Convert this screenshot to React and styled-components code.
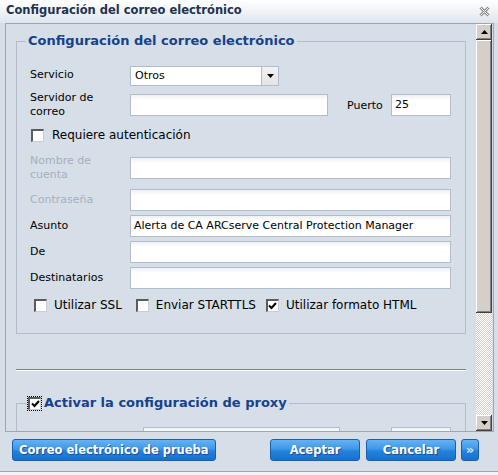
import React from "react";
import styled, { createGlobalStyle } from "styled-components";

const GlobalStyle = createGlobalStyle`
  html, body {
    margin: 0;
    padding: 0;
    background: #f2f3f5;
    font-family: "DejaVu Sans", Verdana, sans-serif;
  }
`;

const Dialog = styled.div`
  width: 498px;
  height: 472px;
  box-sizing: border-box;
  background: #d6dee8;
  border-bottom: 1px solid #9ea4ac;
  display: flex;
  flex-direction: column;
`;

const TitleBar = styled.div`
  height: 23px;
  flex: none;
  display: flex;
  align-items: center;
  padding: 0 8px 0 6px;
  background: linear-gradient(#ffffff, #f3f5f8 40%, #dfe5ed);
`;

const Title = styled.div`
  flex: 1;
  font-size: 11.5px;
  font-weight: bold;
  color: #1e324e;
  padding-bottom: 3px;
`;

const Body = styled.div`
  padding: 0 4px 0 5px;
`;

const ScrollPanel = styled.div`
  height: 409px;
  box-sizing: border-box;
  border: 1px solid #a2a6ac;
  display: flex;
`;

const Content = styled.div`
  flex: 1;
  overflow: hidden;
  padding: 0 10px;
`;

const Fieldset = styled.fieldset`
  margin: ${(p) => p.$top}px 0 0;
  border: 1px solid #b5bcc9;
  padding: ${(p) => p.$padTop}px 13px 17px 13px;
  display: flex;
  flex-direction: column;
  gap: 4px;
`;

const Legend = styled.legend`
  margin-left: -4px;
  padding: 0 2px;
  font-size: 13px;
  line-height: 16px;
  font-weight: bold;
  color: #15428b;
  display: flex;
  align-items: center;
  gap: 3px;
`;

const Row = styled.div`
  display: flex;
  align-items: center;
  height: ${(p) => p.$h || 22}px;
  margin-top: ${(p) => p.$mt || 0}px;
`;

const Label = styled.div`
  width: ${(p) => p.$w || 100}px;
  flex: none;
  font-size: 11px;
  line-height: 14px;
  color: ${(p) => (p.$disabled ? "#a6afbd" : "#000")};
`;

const Input = styled.div`
  width: ${(p) => p.$w}px;
  height: 22px;
  box-sizing: border-box;
  border: 1px solid #b3bccc;
  background: linear-gradient(#eef0f4, #ffffff 5px);
  font-size: 11px;
  line-height: 20px;
  padding: 0 3px;
  color: #000;
  white-space: nowrap;
  overflow: hidden;
`;

const Select = styled.div`
  width: 149px;
  height: 20px;
  box-sizing: border-box;
  border: 1px solid #b3bccc;
  background: #fff;
  display: flex;
  margin-top: 1px;
`;

const SelectText = styled.div`
  flex: 1;
  font-size: 11px;
  line-height: 18px;
  padding: 0 4px;
`;

const SelectButton = styled.div`
  width: 16px;
  border-left: 1px solid #b3bccc;
  background: linear-gradient(#f2f2f2, #e4e4e4);
  display: flex;
  align-items: center;
  justify-content: center;
`;

const PortLabel = styled.div`
  width: ${(p) => p.$w || 44}px;
  flex: none;
  font-size: 11px;
  margin-left: 19px;
`;

const CheckLabel = styled.label`
  display: flex;
  align-items: center;
  gap: ${(p) => p.$gap || 7}px;
  font-size: 12px;
  color: #000;
  margin-left: ${(p) => p.$ml || 0}px;
`;

const Box = styled.span`
  width: 13px;
  height: 13px;
  box-sizing: border-box;
  flex: none;
  background: #fff;
  border-top: 2px solid #5c5c5c;
  border-left: 2px solid #5c5c5c;
  border-right: 1px solid #c9ccd2;
  border-bottom: 1px solid #c9ccd2;
  display: flex;
  align-items: center;
  justify-content: center;
  outline: ${(p) => (p.$focus ? "1px dotted #000" : "none")};
  outline-offset: 0;
`;

const Separator = styled.div`
  margin-top: 35px;
  height: 1px;
  background: #7e8286;
  border-bottom: 1px solid #ffffff;
`;

const Scrollbar = styled.div`
  width: 16px;
  margin-right: 1px;
  display: flex;
  flex-direction: column;
  background: repeating-conic-gradient(#d4d0c8 0 25%, #ffffff 0 50%) 0 0 / 2px 2px;
`;

const raised = `
  background: #d4d0c8;
  box-shadow: inset -1px -1px #404040, inset 1px 1px #ffffff, inset -2px -2px #808080;
`;

const ScrollButton = styled.div`
  height: 16px;
  flex: none;
  ${raised}
  display: flex;
  align-items: center;
  justify-content: center;
`;

const Thumb = styled.div`
  height: 273px;
  flex: none;
  ${raised}
`;

const Track = styled.div`
  flex: 1;
`;

const ButtonBar = styled.div`
  display: flex;
  align-items: center;
  gap: 6px;
  padding: 7px 19px 0 12px;
`;

const Button = styled.div`
  height: 22px;
  width: ${(p) => (p.$w ? `${p.$w}px` : "auto")};
  box-sizing: border-box;
  padding: 0 ${(p) => (p.$w ? 0 : 6)}px;
  border: 1px solid #1a5fae;
  border-radius: 3px;
  background: linear-gradient(#64b2f3, #3d98e8 45%, #2581dc 55%, #1670d0);
  color: #fff;
  font-size: 11.5px;
  font-weight: bold;
  line-height: 20px;
  text-align: center;
  text-shadow: 1px 1px 0 #1b4f8f;
  white-space: nowrap;
`;

const MoreButton = styled(Button)`
  width: 18px;
  padding: 0;
  font-size: 13px;
  color: #cfe4fa;
  text-shadow: none;
  margin-left: -1px;
`;

const Spacer = styled.div`
  flex: 1;
`;

const Check = () => (
  <svg width="9" height="8" viewBox="0 0 9 8">
    <path d="M1 3.5 L3.5 6 L8 1" fill="none" stroke="#000" strokeWidth="2" />
  </svg>
);

const Arrow = ({ up }) => (
  <svg width="7" height="4" viewBox="0 0 7 4" style={{ transform: up ? "rotate(180deg)" : "none" }}>
    <path d="M0 0 H7 L3.5 4 Z" fill="#000" />
  </svg>
);

const CloseIcon = () => (
  <svg width="11" height="11" viewBox="0 0 11 11">
    <path d="M1.5 1.5 L9.5 9.5 M9.5 1.5 L1.5 9.5" stroke="#8e8e8e" strokeWidth="3" />
    <path d="M1.5 1.5 L9.5 9.5 M9.5 1.5 L1.5 9.5" stroke="#f4f4f4" strokeWidth="1" />
  </svg>
);

function Checkbox({ checked, focus, children, gap, ml }) {
  return (
    <CheckLabel $gap={gap} $ml={ml}>
      <Box $focus={focus}>{checked && <Check />}</Box>
      {children}
    </CheckLabel>
  );
}

export default function App() {
  return (
    <>
      <GlobalStyle />
      <Dialog>
        <TitleBar>
          <Title>Configuración del correo electrónico</Title>
          <CloseIcon />
        </TitleBar>
        <Body>
          <ScrollPanel>
            <Content>
              <Fieldset $top={9} $padTop={15}>
                <Legend>Configuración del correo electrónico</Legend>
                <Row>
                  <Label>Servicio</Label>
                  <Select>
                    <SelectText>Otros</SelectText>
                    <SelectButton>
                      <Arrow />
                    </SelectButton>
                  </Select>
                </Row>
                <Row $h={30}>
                  <Label>
                    Servidor de
                    <br />
                    correo
                  </Label>
                  <Input $w={198} />
                  <PortLabel>Puerto</PortLabel>
                  <Input $w={60}>25</Input>
                </Row>
                <Row>
                  <Checkbox ml={1} gap={8}>
                    Requiere autenticación
                  </Checkbox>
                </Row>
                <Row $h={30} $mt={3}>
                  <Label $disabled>
                    Nombre de
                    <br />
                    cuenta
                  </Label>
                  <Input $w={321} />
                </Row>
                <Row $mt={2}>
                  <Label $disabled>Contraseña</Label>
                  <Input $w={321} />
                </Row>
                <Row>
                  <Label>Asunto</Label>
                  <Input $w={321}>Alerta de CA ARCserve Central Protection Manager</Input>
                </Row>
                <Row>
                  <Label>De</Label>
                  <Input $w={321} />
                </Row>
                <Row>
                  <Label>Destinatarios</Label>
                  <Input $w={321} />
                </Row>
                <Row $mt={1}>
                  <Checkbox ml={4}>Utilizar SSL</Checkbox>
                  <Checkbox ml={14}>Enviar STARTTLS</Checkbox>
                  <Checkbox ml={10} checked>
                    Utilizar formato HTML
                  </Checkbox>
                </Row>
              </Fieldset>
              <Separator />
              <Fieldset $top={24} $padTop={16}>
                <Legend>
                  <Box $focus>
                    <Check />
                  </Box>
                  Activar la configuración de proxy
                </Legend>
                <Row>
                  <Label $w={113} />
                  <Input $w={197} />
                  <PortLabel $w={32} />
                  <Input $w={60} />
                </Row>
              </Fieldset>
            </Content>
            <Scrollbar>
              <ScrollButton>
                <Arrow up />
              </ScrollButton>
              <Thumb />
              <Track />
              <ScrollButton>
                <Arrow />
              </ScrollButton>
            </Scrollbar>
          </ScrollPanel>
        </Body>
        <ButtonBar>
          <Button>Correo electrónico de prueba</Button>
          <Spacer />
          <Button $w={90}>Aceptar</Button>
          <Button $w={90}>Cancelar</Button>
          <MoreButton>»</MoreButton>
        </ButtonBar>
      </Dialog>
    </>
  );
}
